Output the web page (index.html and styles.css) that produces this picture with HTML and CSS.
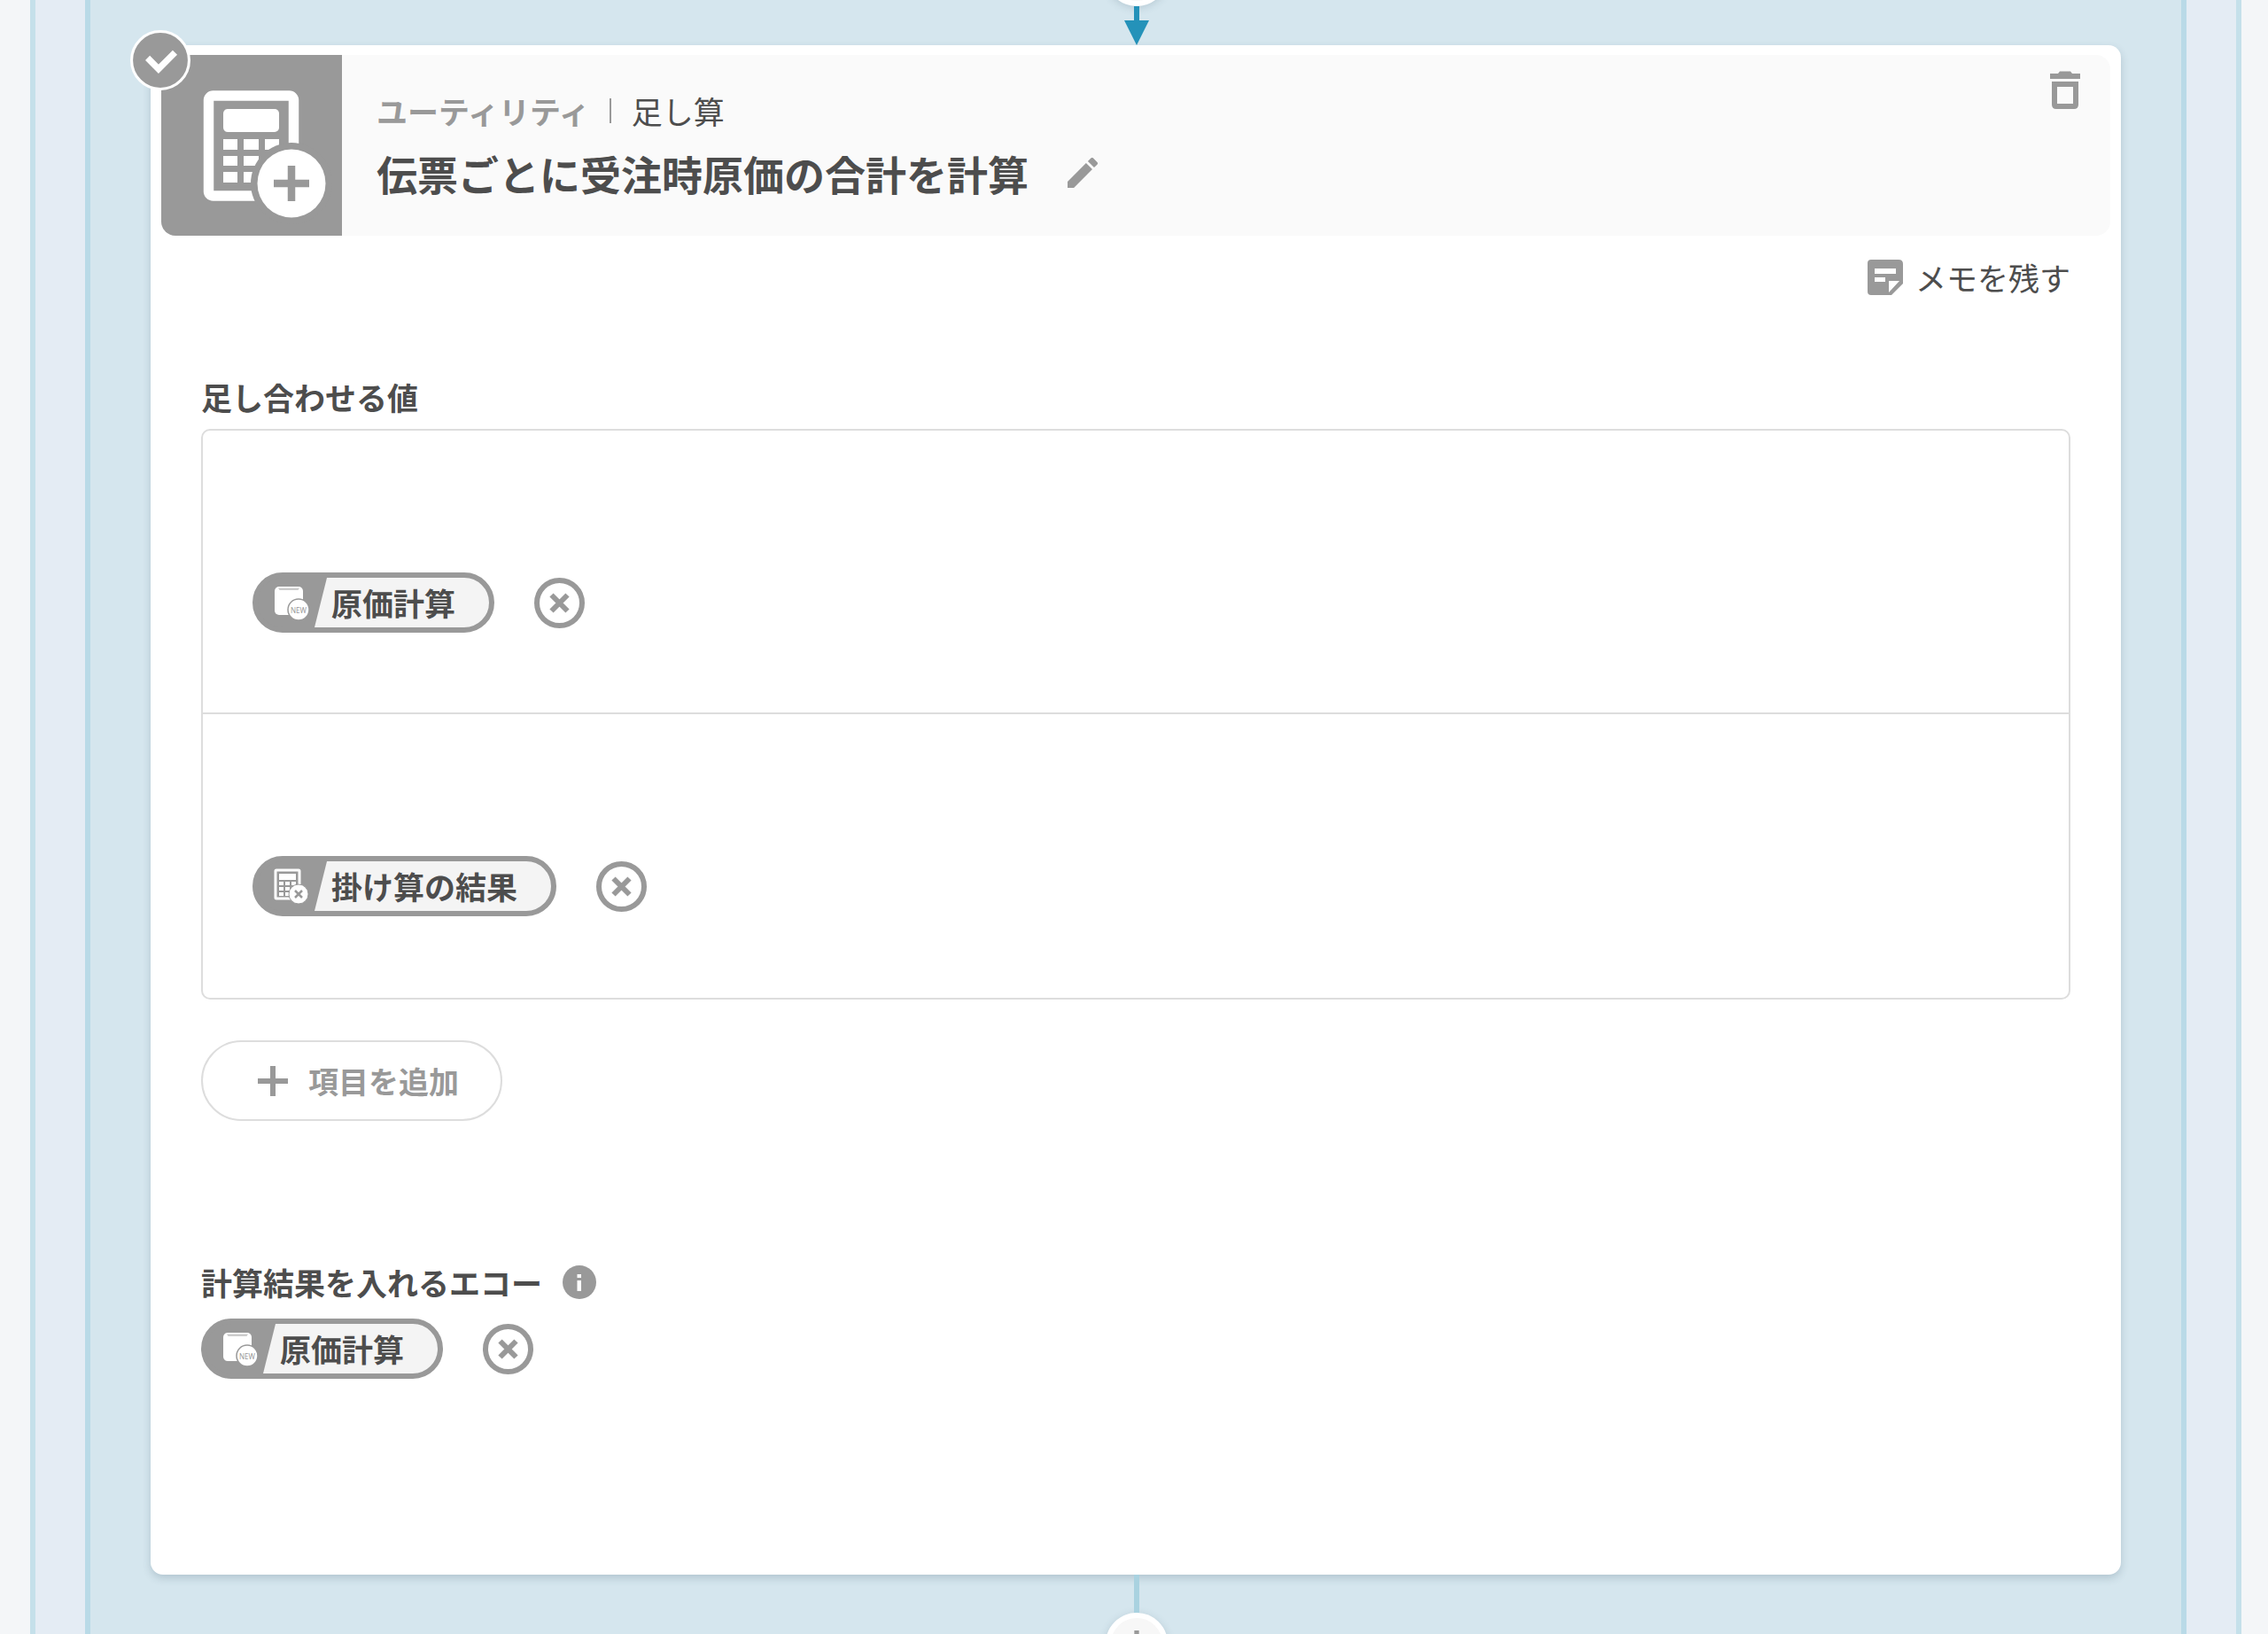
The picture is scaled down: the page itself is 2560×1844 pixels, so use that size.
FILE: index.html
```html
<!DOCTYPE html>
<html lang="ja">
<head>
<meta charset="utf-8">
<meta name="viewport" content="width=device-width, initial-scale=1">
<title>伝票ごとに受注時原価の合計を計算</title>
<link rel="stylesheet" href="styles.css">
</head>
<body>
<svg class="sprite" aria-hidden="true">
  <symbol id="icon-close" viewBox="0 0 57 57">
    <circle cx="28.5" cy="28.5" r="25.500" fill="#fff" stroke="#999" stroke-width="6"/>
    <path d="M19.500 19.500l18 18M37.500 19.500l-18 18" stroke="#999" stroke-width="6"/>
  </symbol>
  <symbol id="icon-multiply" viewBox="0 0 40 40">
    <rect x="2" y="2" width="27" height="32" rx="1" fill="none" stroke="#fff" stroke-width="3"/>
    <rect x="6" y="6" width="19" height="7" fill="#fff"/>
    <path d="M6 15h5v4H6zM13 15h5v4h-5zM20 15h5v4h-5zM6 21h5v4H6zM13 21h5v4h-5zM6 27h5v4H6zM13 27h5v4h-5z" fill="#fff"/>
    <circle cx="28" cy="29" r="11" fill="#fff" stroke="#999" stroke-width="1"/>
    <path d="M24 25l8 8M32 25l-8 8" stroke="#999" stroke-width="2.500"/>
  </symbol>
  <symbol id="icon-plus" viewBox="0 0 34 34">
    <path d="M17 0v34M0 17h34" stroke="#999" stroke-width="6"/>
  </symbol>
</svg>
<main class="lane lane-outer">
  <div class="lane lane-inner">
    <div class="connector connector-in">
      <button class="add-step" type="button" aria-label="ステップを追加"><svg class="add-icon"><use href="#icon-plus"/></svg></button>
      <svg class="arrow" viewBox="0 0 28 44" aria-hidden="true"><path d="M11 0h6v16h11L14 44 0 16h11z" fill="#2492b9"/></svg>
    </div>

    <article class="card">
      <svg class="check" viewBox="0 0 66 66" role="img" aria-label="設定済み">
        <circle cx="33" cy="33" r="31.500" fill="#999" stroke="#fff" stroke-width="3"/>
        <path d="M19 30.500l12 12 18-18" fill="none" stroke="#fff" stroke-width="7"/>
      </svg>
      <header class="card-header">
        <svg class="app-icon" viewBox="0 0 204 204" aria-hidden="true">
          <rect x="53.500" y="46" width="96" height="113" rx="5" fill="none" stroke="#fff" stroke-width="11.500"/>
          <rect x="70" y="61" width="63" height="26" rx="5" fill="#fff"/>
          <path d="M70 95h16v12H70zM93 95h17v12H93zM117 95h16v12h-16zM70 114h16v11H70zM93 114h17v11H93zM70 132h16v12H70zM93 132h17v12H93z" fill="#fff"/>
          <circle cx="147" cy="145" r="46" fill="#999"/>
          <circle cx="147" cy="145" r="38.500" fill="#fff"/>
          <path d="M147 125v40M127 145h40" stroke="#999" stroke-width="8.500"/>
        </svg>
        <div class="heading">
          <p class="crumbs"><span class="category">ユーティリティ</span><span class="kind">足し算</span></p>
          <div class="title-row">
            <h1 class="title">伝票ごとに受注時原価の合計を計算</h1>
            <button class="icon-button" type="button" aria-label="名前を編集">
              <svg class="pencil" viewBox="3 3 18 18"><path d="M3 17.250V21h3.750L17.810 9.940l-3.750-3.750L3 17.250zM20.710 7.040a1 1 0 0 0 0-1.410l-2.340-2.340a1 1 0 0 0-1.410 0l-1.830 1.830 3.750 3.750 1.830-1.830z" fill="#999"/></svg>
            </button>
          </div>
        </div>
        <button class="icon-button delete" type="button" aria-label="削除">
          <svg class="trash" viewBox="0 0 34 44"><path d="M0 3h9l2-2.500h12L25 3h9v6H0z" fill="#999"/><path d="M5 15h24v23q0 2-2 2H7q-2 0-2-2z" fill="none" stroke="#999" stroke-width="6"/></svg>
        </button>
      </header>

      <div class="card-body">
        <button class="memo" type="button">
          <svg class="memo-icon" viewBox="0 0 42 42" aria-hidden="true"><path d="M5 1h31q5 0 5 5v22L28 41H5q-4 0-4-4V5q0-4 4-4z" fill="#999"/><path d="M9 11h24v6H9zM9 21h12v5H9zM25 38V25h12z" fill="#fff"/></svg>
          メモを残す
        </button>

        <section class="field">
          <h2 class="label">足し合わせる値</h2>
          <ul class="values">
            <li class="value">
              <span class="chip"><span class="chip-tab"><svg class="chip-icon" viewBox="0 0 40 40" aria-hidden="true"><rect x="1" y="2" width="32" height="32" rx="5" fill="#fff"/><path d="M5 3.500h24l-1.500 2.500H6.500z" fill="#ccc"/><circle cx="28" cy="28" r="12" fill="#fff" stroke="#999" stroke-width="1.500"/><text x="28" y="32" class="echo-new">NEW</text></svg></span>原価計算</span>
              <button class="icon-button" type="button" aria-label="原価計算を外す"><svg class="close"><use href="#icon-close"/></svg></button>
            </li>
            <li class="value">
              <span class="chip"><span class="chip-tab"><svg class="chip-icon"><use href="#icon-multiply"/></svg></span>掛け算の結果</span>
              <button class="icon-button" type="button" aria-label="掛け算の結果を外す"><svg class="close"><use href="#icon-close"/></svg></button>
            </li>
          </ul>
          <button class="add-item" type="button"><svg class="plus"><use href="#icon-plus"/></svg>項目を追加</button>
        </section>

        <section class="field field-result">
          <h2 class="label">計算結果を入れるエコー
            <svg class="info" viewBox="0 0 38 38" role="img" aria-label="説明"><circle cx="19" cy="19" r="19" fill="#999"/><path d="M16.500 10h4.500v4h-4.500zM16.500 17h4.500v12h-4.500z" fill="#fff"/></svg>
          </h2>
          <div class="result">
            <span class="chip"><span class="chip-tab"><svg class="chip-icon" viewBox="0 0 40 40" aria-hidden="true"><rect x="1" y="2" width="32" height="32" rx="5" fill="#fff"/><path d="M5 3.500h24l-1.500 2.500H6.500z" fill="#ccc"/><circle cx="28" cy="28" r="12" fill="#fff" stroke="#999" stroke-width="1.500"/><text x="28" y="32" class="echo-new">NEW</text></svg></span>原価計算</span>
            <button class="icon-button" type="button" aria-label="原価計算を外す"><svg class="close"><use href="#icon-close"/></svg></button>
          </div>
        </section>
      </div>
    </article>

    <div class="connector connector-out">
      <span class="line"></span>
      <button class="add-step" type="button" aria-label="ステップを追加"><svg class="add-icon"><use href="#icon-plus"/></svg></button>
    </div>
  </div>
</main>
</body>
</html>
```

FILE: styles.css
```css
* { box-sizing: border-box; }

body {
  margin: 0;
  height: 100vh;
  overflow: hidden;
  padding: 0 30px 0 34px;
  background: #f4f6f8;
  color: #4d4d4d;
  font: 35px/52px "Noto Sans CJK JP", sans-serif;
}

h1, h2, p, ul { margin: 0; padding: 0; }
ul { list-style: none; }
svg { display: block; flex: none; }
button { padding: 0; border: 0; background: none; color: inherit; font: inherit; cursor: pointer; }
.sprite { position: absolute; width: 0; height: 0; }

/* nested flow lanes */
.lane { min-height: 100vh; border: solid; border-width: 0 6px; }
.lane-outer { padding: 0 56px; border-color: #c5e0ea; background: #e4ecf4; }
.lane-inner { padding: 0 68px; border-color: #b9dae7; background: #d5e6ee; }

.connector { display: flex; flex-direction: column; align-items: center; padding-left: 2px; }
.connector-in { margin-top: -63px; }
.arrow { width: 28px; height: 44px; }
.line { position: relative; width: 6px; height: 43px; background: #a9d2e0; }
.add-step {
  display: grid;
  place-items: center;
  width: 70px;
  height: 70px;
  border: 6px solid #fff;
  border-radius: 50%;
  background: #f7f7f7;
  box-shadow: 0 2px 10px rgba(60, 90, 110, 0.2);
}
.add-icon { width: 30px; height: 30px; }

/* card */
.card {
  position: relative;
  padding: 11px 12px 0;
  border-radius: 14px;
  background: #fff;
  box-shadow: 0 4px 10px rgba(40, 70, 90, 0.2);
}
.check { position: absolute; top: -17px; left: -23px; width: 68px; height: 68px; }
.card-header {
  display: flex;
  border-radius: 16px;
  background: #fafafa;
  overflow: hidden;
}
.app-icon { width: 204px; height: 204px; background: #999; }
.heading { flex: 1; padding: 37px 0 0 39px; }
.crumbs { display: flex; align-items: center; }
.category { color: #999; font-weight: 700; }
.kind { display: flex; align-items: center; gap: 23px; padding-left: 22px; }
.kind::before { content: ""; width: 2px; height: 28px; background: #999; }
.title-row { display: flex; align-items: center; gap: 44px; padding-top: 10px; }
.title { font-size: 46px; line-height: 68px; font-weight: 700; }
.pencil { width: 34px; height: 34px; }
.delete { align-self: flex-start; margin: 18px 34px 0 0; }
.trash { width: 34px; height: 44px; }

.card-body { padding: 26px 45px 221px; }
.memo { display: flex; align-items: center; gap: 13px; height: 42px; margin-left: auto; }
.memo-icon { width: 42px; height: 42px; }

.field { padding-top: 88px; }
.field-result { padding-top: 156px; }
.label { display: flex; align-items: center; gap: 23px; font-size: 35px; font-weight: 700; }
.info { width: 38px; height: 38px; }

.values { margin-top: 10px; padding-bottom: 2px; border: 2px solid #ddd; border-radius: 10px; }
.value, .result { display: flex; align-items: center; gap: 45px; }
.value { padding: 160px 56px 90px; }
.value + .value { border-top: 2px solid #ddd; }
.result { margin-top: 15px; }

.chip {
  display: flex;
  align-items: center;
  gap: 5px;
  height: 68px;
  padding-right: 38px;
  border: 6px solid #999;
  border-radius: 34px;
  background: linear-gradient(90deg, #999 50px, #f4f4f4 50px) border-box;
  font-weight: 700;
}
.chip-tab {
  display: flex;
  align-items: center;
  width: 78px;
  height: 56px;
  padding-left: 18px;
  border-radius: 28px 0 0 28px;
  background: #999;
  clip-path: polygon(0 0, 100% 0, 64px 100%, 0 100%);
}
.chip-icon { width: 40px; height: 40px; }
.echo-new { fill: #999; font: 8px "Noto Sans", sans-serif; text-anchor: middle; }
.close { width: 57px; height: 57px; }

.add-item {
  display: flex;
  align-items: center;
  gap: 23px;
  height: 91px;
  margin-top: 46px;
  padding: 0 47px 0 62px;
  border: 2px solid #ddd;
  border-radius: 46px;
  color: #999;
  font-size: 34px;
  font-weight: 700;
}
.plus { width: 34px; height: 34px; }
```
